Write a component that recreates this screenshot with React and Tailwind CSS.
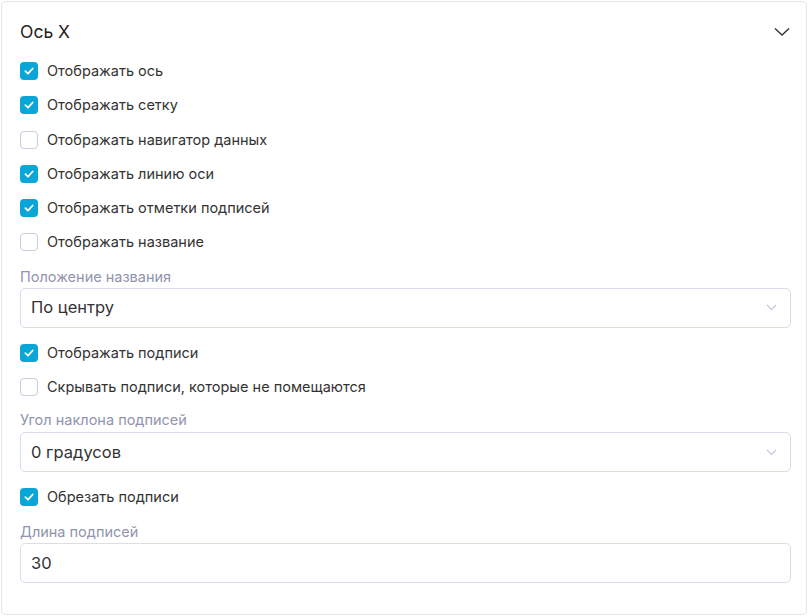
import React from "react";

const Check = ({ checked, label }) => (
  <label className="flex h-[34.25px] items-center gap-[9px]">
    {checked ? (
      <span className="flex h-[18px] w-[18px] items-center justify-center rounded-[4px] bg-[#0aa6d8]">
        <svg width="12" height="12" viewBox="0 0 12 12" fill="none">
          <path d="M2.4 6.2 L5 8.7 L9.7 3.5" stroke="white" strokeWidth="1.8" strokeLinecap="round" strokeLinejoin="round" />
        </svg>
      </span>
    ) : (
      <span className="h-[18px] w-[18px] rounded-[4px] border border-[#c9cde0] bg-white" />
    )}
    <span className="text-[14.5px] leading-5 text-[#333333]">{label}</span>
  </label>
);

const FieldLabel = ({ children }) => (
  <div className="text-[14.5px] leading-5 text-[#9094ad]">{children}</div>
);

const Select = ({ value }) => (
  <div className="flex h-[40px] items-center justify-between rounded-[5px] border border-[#dcdcec] bg-white pl-[10px] pr-[13px]">
    <span className="text-[16.5px] text-[#333333]">{value}</span>
    <svg width="11" height="7" viewBox="0 0 11 7" fill="none">
      <path d="M1 1 L5.5 5.5 L10 1" stroke="#c3c6da" strokeWidth="1.1" />
    </svg>
  </div>
);

export default function App() {
  return (
    <div className="bg-white p-px" style={{ fontFamily: "Inter, 'Noto Sans', sans-serif" }}>
      <div className="h-[614px] w-[806px] rounded-[4px] border border-[#e6e6e6] bg-white pl-[18px] pr-[15px] pt-[17px]">
        <div className="flex h-[26px] items-center justify-between">
          <span className="text-[17.5px] text-[#222222]">Ось X</span>
          <svg className="mr-[1px]" width="16" height="10" viewBox="0 0 16 10" fill="none">
            <path d="M1 1.5 L8 8 L15 1.5" stroke="#333333" strokeWidth="1.4" />
          </svg>
        </div>
        <div className="mt-[9px] flex flex-col">
          <Check checked label="Отображать ось" />
          <Check checked label="Отображать сетку" />
          <Check label="Отображать навигатор данных" />
          <Check checked label="Отображать линию оси" />
          <Check checked label="Отображать отметки подписей" />
          <Check label="Отображать название" />
        </div>
        <div className="mt-[7px]">
          <FieldLabel>Положение названия</FieldLabel>
          <div className="mt-[1px]">
            <Select value="По центру" />
          </div>
        </div>
        <div className="mt-[8px] flex flex-col">
          <Check checked label="Отображать подписи" />
          <Check label="Скрывать подписи, которые не помещаются" />
        </div>
        <div className="mt-[6px]">
          <FieldLabel>Угол наклона подписей</FieldLabel>
          <div className="mt-[2px]">
            <Select value="0 градусов" />
          </div>
        </div>
        <div className="mt-[8px] flex flex-col">
          <Check checked label="Обрезать подписи" />
        </div>
        <div className="mt-[8px]">
          <FieldLabel>Длина подписей</FieldLabel>
          <div className="mt-[1px] flex h-[40px] items-center rounded-[5px] border border-[#dcdcec] bg-white pl-[10px]">
            <span className="text-[16.5px] text-[#333333]">30</span>
          </div>
        </div>
      </div>
    </div>
  );
}
